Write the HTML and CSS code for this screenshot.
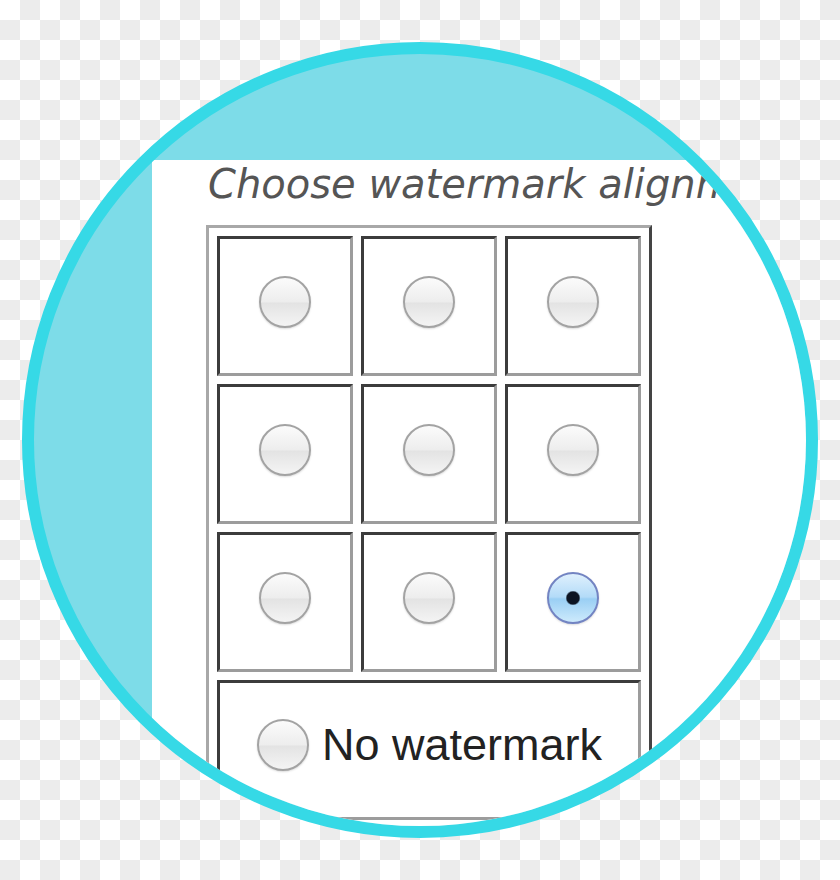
FILE: index.html
```html
<!DOCTYPE html>
<html lang="en">
<head>
    <meta charset="UTF-8">
    <meta name="viewport" content="width=device-width, initial-scale=1.0">
    <title>Watermark alignment</title>
    <link rel="stylesheet" href="styles.css">
</head>
<body>
    <div class="badge">
        <div class="panel">
            <h2 class="title">Choose watermark alignment</h2>

            <table class="align-grid">
                <tr>
                    <td><input class="radio" type="radio" name="align" value="tl"></td>
                    <td><input class="radio" type="radio" name="align" value="tc"></td>
                    <td><input class="radio" type="radio" name="align" value="tr"></td>
                </tr>
                <tr>
                    <td><input class="radio" type="radio" name="align" value="ml"></td>
                    <td><input class="radio" type="radio" name="align" value="mc"></td>
                    <td><input class="radio" type="radio" name="align" value="mr"></td>
                </tr>
                <tr>
                    <td><input class="radio" type="radio" name="align" value="bl"></td>
                    <td><input class="radio" type="radio" name="align" value="bc"></td>
                    <td><input class="radio" type="radio" name="align" value="br" checked></td>
                </tr>
                <tr>
                    <td class="none-cell" colspan="3">
                        <label class="none">
                            <input class="radio" type="radio" name="align" value="none">
                            No watermark
                        </label>
                    </td>
                </tr>
            </table>
        </div>
    </div>
</body>
</html>
```

FILE: styles.css
```css
body {
    margin: 0;
    width: 840px;
    height: 880px;
    overflow: hidden;
    font-family: 'Liberation Sans', Arial, sans-serif;
    background-color: #fff;
    background-image: conic-gradient(#ececec 25%, #fff 0 50%, #ececec 0 75%, #fff 0);
    background-size: 40px 40px;
}
.badge {
    box-sizing: border-box;
    width: 796px;
    height: 796px;
    margin: 42px 0 0 22px;
    padding: 106px 0 0 118px;
    border: 12px solid #36d9e6;
    border-radius: 50%;
    background: #7ddce8;
    overflow: hidden;
}
.panel {
    height: 100%;
    padding-left: 54px;
    background: #fff;
}
.title {
    width: 512px;
    margin: 0 0 17px 2px;
    font-family: 'DejaVu Sans', sans-serif;
    font-size: 40px;
    font-style: italic;
    font-weight: normal;
    line-height: 48px;
    color: #555;
    white-space: nowrap;
    overflow: hidden;
}
.align-grid {
    border-collapse: separate;
    border-spacing: 8px 8px;
    border: 3px solid;
    border-color: #a8a8a8 #444 #444 #a8a8a8;
}
.align-grid td {
    width: 130px;
    height: 126px;
    padding: 0 0 8px;
    border: 3px solid;
    border-color: #3c3c3c #9c9c9c #9c9c9c #3c3c3c;
    text-align: center;
    vertical-align: middle;
}
.align-grid td > .radio {
    display: block;
    margin: 0 auto;
}
.align-grid .none-cell {
    height: 124px;
    padding: 0 0 10px 37px;
    text-align: left;
}
.none {
    display: flex;
    align-items: center;
    gap: 13px;
    font-size: 45px;
    color: #222;
}
.none .radio {
    margin: 0;
}
.radio {
    appearance: none;
    -webkit-appearance: none;
    flex: none;
    box-sizing: border-box;
    width: 52px;
    height: 52px;
    border: 2px solid #a3a3a3;
    border-radius: 50%;
    background: linear-gradient(#fbfbfb, #ededed 50%, #e3e3e3 52%, #f4f4f4);
    box-shadow: 0 1px 2px rgba(0,0,0,0.15);
}
.radio:checked {
    border-color: #7384c2;
    background: radial-gradient(circle, #0c1422 0 6px, transparent 7.5px),
        linear-gradient(#dff0fd, #b3dbf8 48%, #9acff4 52%, #cdeafc);
}
```
